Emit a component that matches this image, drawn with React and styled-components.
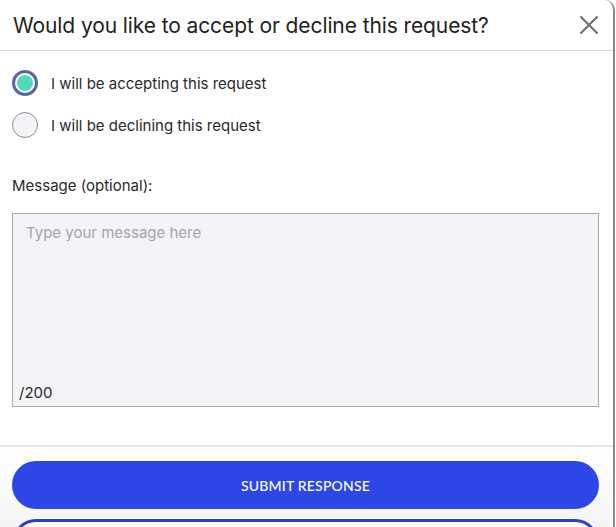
import React, { useState } from "react";
import styled, { createGlobalStyle } from "styled-components";

const GlobalStyle = createGlobalStyle`
  html, body {
    margin: 0;
    padding: 0;
    background: #ffffff;
    overflow: hidden;
  }
  body {
    font-family: "Inter", "Noto Sans", sans-serif;
    color: #212121;
  }
`;

const Modal = styled.div`
  width: 613px;
  background: #ffffff;
  border-right: 2px solid #8a8a8a;
  border-top-right-radius: 10px;
  display: flex;
  flex-direction: column;
`;

const Header = styled.div`
  height: 51px;
  flex-shrink: 0;
  box-sizing: border-box;
  display: flex;
  align-items: center;
  justify-content: space-between;
  padding: 0 12px 0 13px;
  border-bottom: 1px solid #d6d6d6;
`;

const Title = styled.h2`
  margin: 0;
  font-size: 21px;
  font-weight: 400;
  color: #222;
  letter-spacing: -0.1px;
`;

const CloseButton = styled.button`
  border: none;
  background: none;
  padding: 0;
  width: 24px;
  height: 24px;
  display: flex;
  align-items: center;
  justify-content: center;
  cursor: pointer;
`;

const Body = styled.div`
  padding: 19px 14px 0 12px;
  display: flex;
  flex-direction: column;
`;

const Options = styled.div`
  display: flex;
  flex-direction: column;
  gap: 16px;
`;

const Option = styled.label`
  display: flex;
  align-items: center;
  gap: 13px;
  font-size: 15px;
  color: #2a2a2a;
  cursor: pointer;
`;

const RadioDot = styled.span`
  width: 26px;
  height: 26px;
  box-sizing: border-box;
  border-radius: 50%;
  display: flex;
  align-items: center;
  justify-content: center;
  background: ${(p) => (p.$checked ? "#ffffff" : "#f4f4f8")};
  border: ${(p) => (p.$checked ? "3px solid #5866a4" : "1px solid #8d8d8d")};

  &::after {
    content: "";
    width: 16px;
    height: 16px;
    border-radius: 50%;
    background: #55d9b6;
    display: ${(p) => (p.$checked ? "block" : "none")};
  }
`;

const FieldLabel = styled.div`
  margin-top: 38px;
  font-size: 15px;
  color: #2a2a2a;
`;

const MessageBox = styled.div`
  margin-top: 18px;
  height: 194px;
  box-sizing: border-box;
  background: #f4f4f8;
  border: 1px solid #a9a9ad;
  display: flex;
  flex-direction: column;
  justify-content: space-between;
  padding: 9px 14px 4px 6px;
`;

const MessageInput = styled.textarea`
  flex: 1;
  border: none;
  outline: none;
  resize: none;
  background: transparent;
  font-family: inherit;
  font-size: 15px;
  color: #2a2a2a;
  padding: 0 0 0 7px;

  &::placeholder {
    color: #a4a4a8;
  }
`;

const Counter = styled.span`
  font-size: 15px;
  color: #2a2a2a;
`;

const Footer = styled.div`
  margin-top: 38px;
  border-top: 2px solid #e6e6e6;
  background: linear-gradient(#ffffff, #ececec);
  padding: 14px 14px 24px 12px;
  display: flex;
  flex-direction: column;
  gap: 10px;
`;

const PillButton = styled.button`
  height: 48px;
  border-radius: 24px;
  font-family: "Lato", "Liberation Sans", sans-serif;
  font-size: 14px;
  font-weight: 500;
  letter-spacing: 0.2px;
  text-transform: uppercase;
  cursor: pointer;
  color: ${(p) => (p.$outline ? "#2b44de" : "#ffffff")};
  background: ${(p) => (p.$outline ? "#ffffff" : "#2d47e6")};
  border: ${(p) => (p.$outline ? "3px solid #2c3fc8" : "none")};
`;

const CloseIcon = () => (
  <svg width="20" height="20" viewBox="0 0 20 20">
    <path
      d="M2 2 L18 18 M18 2 L2 18"
      stroke="#6e6e6e"
      strokeWidth="2"
      strokeLinecap="round"
    />
  </svg>
);

const choices = [
  { id: "accept", label: "I will be accepting this request" },
  { id: "decline", label: "I will be declining this request" },
];

export default function App() {
  const [choice, setChoice] = useState("accept");
  const [message, setMessage] = useState("");

  return (
    <>
      <GlobalStyle />
      <Modal>
        <Header>
          <Title>Would you like to accept or decline this request?</Title>
          <CloseButton aria-label="Close">
            <CloseIcon />
          </CloseButton>
        </Header>
        <Body>
          <Options>
            {choices.map((c) => (
              <Option key={c.id} onClick={() => setChoice(c.id)}>
                <RadioDot $checked={choice === c.id} />
                {c.label}
              </Option>
            ))}
          </Options>
          <FieldLabel>Message (optional):</FieldLabel>
          <MessageBox>
            <MessageInput
              placeholder="Type your message here"
              value={message}
              maxLength={200}
              onChange={(e) => setMessage(e.target.value)}
            />
            <Counter>
              {message.length ? message.length : ""}/200
            </Counter>
          </MessageBox>
        </Body>
        <Footer>
          <PillButton>Submit Response</PillButton>
          <PillButton $outline>Decline</PillButton>
        </Footer>
      </Modal>
    </>
  );
}
